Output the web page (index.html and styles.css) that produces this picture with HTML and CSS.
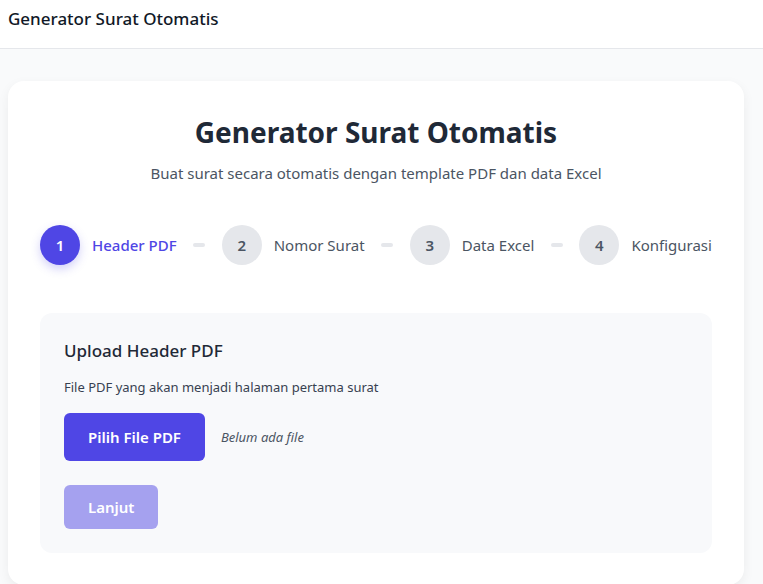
FILE: index.html
```html
<!DOCTYPE html>
<html lang="id">
<head>
<meta charset="utf-8">
<title>Generator Surat Otomatis</title>
<link rel="stylesheet" href="styles.css">
</head>
<body>
<header class="topbar">
  <div class="brand">Generator Surat Otomatis</div>
</header>
<main class="main">
  <section class="card">
    <h1 class="title">Generator Surat Otomatis</h1>
    <p class="subtitle">Buat surat secara otomatis dengan template PDF dan data Excel</p>
    <div class="steps">
      <div class="step active"><span class="circle">1</span><span class="label">Header PDF</span></div>
      <span class="dash"></span>
      <div class="step"><span class="circle">2</span><span class="label">Nomor Surat</span></div>
      <span class="dash"></span>
      <div class="step"><span class="circle">3</span><span class="label">Data Excel</span></div>
      <span class="dash"></span>
      <div class="step"><span class="circle">4</span><span class="label">Konfigurasi</span></div>
    </div>
    <div class="panel">
      <h2 class="panel-title">Upload Header PDF</h2>
      <p class="panel-desc">File PDF yang akan menjadi halaman pertama surat</p>
      <div class="file-row">
        <button class="btn btn-primary" type="button">Pilih File PDF</button>
        <span class="file-name">Belum ada file</span>
      </div>
      <button class="btn btn-next" type="button" disabled>Lanjut</button>
    </div>
  </section>
</main>
</body>
</html>
```
FILE: styles.css
```css
* { box-sizing: border-box; }
html, body { margin: 0; padding: 0; }
body {
  font-family: "Noto Sans", "Open Sans", sans-serif;
  background: #f9fafb;
  color: #1f2937;
  overflow: hidden;
}
.topbar {
  height: 49px;
  background: #ffffff;
  border-bottom: 1px solid #e5e7eb;
  padding: 7px 8px 0;
}
.brand {
  font-size: 17px;
  font-weight: 500;
  line-height: 24px;
  color: #111827;
}
.main {
  padding: 32px 19px 0 8px;
}
.card {
  background: #ffffff;
  border-radius: 16px;
  box-shadow: 0 4px 12px rgba(0,0,0,0.06);
  padding: 32px 32px 32px;
}
.title {
  margin: 0;
  text-align: center;
  font-size: 28px;
  line-height: 38px;
  font-weight: 700;
  color: #1f2937;
}
.subtitle {
  margin: 10px 0 0;
  text-align: center;
  font-size: 15px;
  line-height: 24px;
  color: #4b5563;
}
.steps {
  margin-top: 40px;
  display: flex;
  align-items: center;
  justify-content: space-between;
}
.step {
  display: flex;
  align-items: center;
  gap: 12px;
}
.circle {
  width: 40px;
  height: 40px;
  border-radius: 50%;
  background: #e5e7eb;
  color: #4b5563;
  font-weight: 600;
  font-size: 15px;
  display: flex;
  align-items: center;
  justify-content: center;
}
.label {
  font-size: 15px;
  color: #4b5563;
}
.step.active .circle {
  background: #4f46e5;
  color: #ffffff;
  box-shadow: 0 4px 10px rgba(79,70,229,0.25);
}
.step.active .label {
  color: #4f46e5;
  font-weight: 500;
}
.dash {
  width: 12px;
  height: 4px;
  border-radius: 2px;
  background: #e5e7eb;
}
.panel {
  margin-top: 48px;
  background: #f8f9fb;
  border-radius: 12px;
  padding: 24px;
}
.panel-title {
  margin: 0;
  font-size: 17px;
  line-height: 28px;
  font-weight: 500;
  color: #1f2937;
}
.panel-desc {
  margin: 12px 0 0;
  font-size: 13px;
  line-height: 20px;
  color: #374151;
}
.file-row {
  margin-top: 16px;
  display: flex;
  align-items: center;
  gap: 16px;
}
.btn {
  font-family: inherit;
  border: none;
  border-radius: 6px;
  color: #ffffff;
  font-weight: 600;
}
.btn-primary {
  background: #4f46e5;
  height: 48px;
  padding: 0 24px;
  font-size: 15px;
}
.file-name {
  font-size: 13px;
  font-style: italic;
  color: #4b5563;
}
.btn-next {
  margin-top: 24px;
  height: 44px;
  padding: 0 24px;
  font-size: 15px;
  background: #a5a1ef;
}
```
